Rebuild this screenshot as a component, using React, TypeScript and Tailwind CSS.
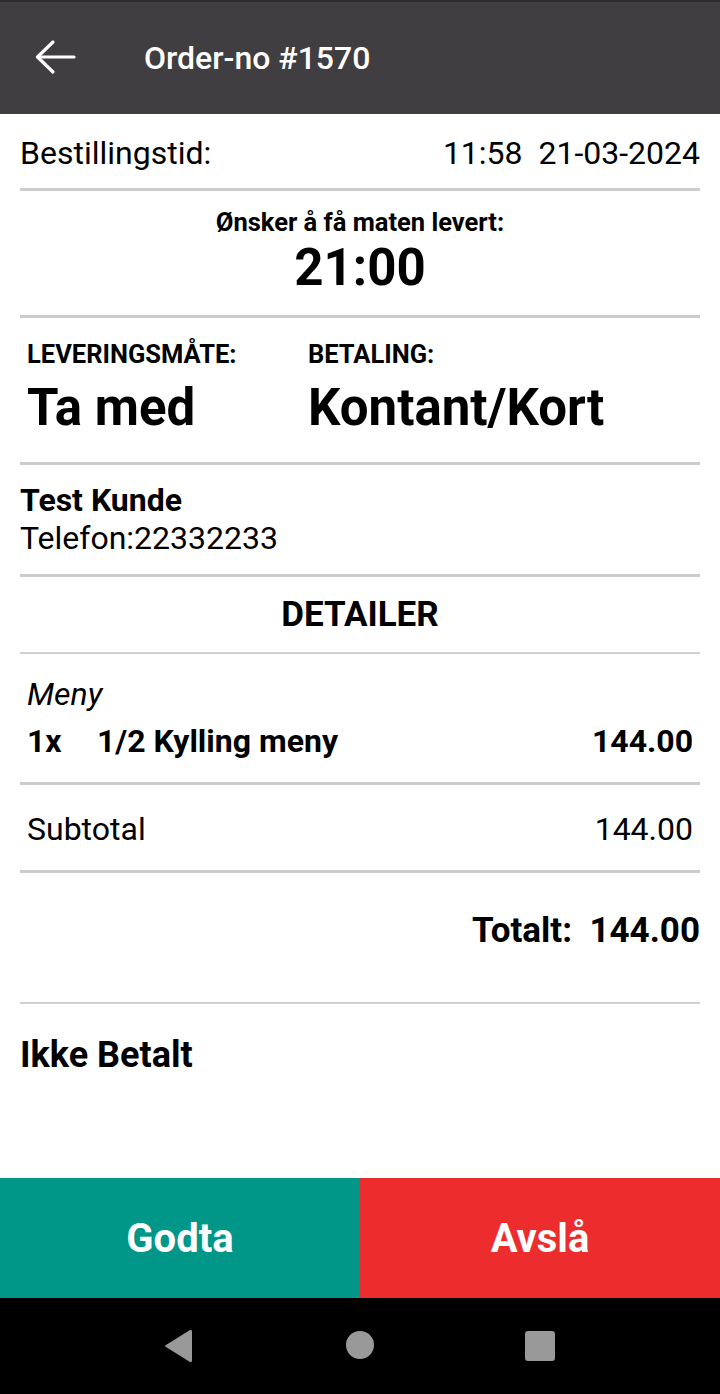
import React from "react";

function Divider({ thin = false }: { thin?: boolean }) {
  return <div className={thin ? "h-[2px] bg-[#d0d0d0]" : "h-[3px] bg-[#cccccc]"} />;
}

function BackArrow() {
  return (
    <svg width="44" height="40" viewBox="0 0 44 40" fill="none" stroke="white" strokeWidth="3.2" strokeLinecap="round" strokeLinejoin="round">
      <path d="M40 19 H4" />
      <path d="M19 4 L3.5 19 L19 34" />
    </svg>
  );
}

function NavBar() {
  return (
    <div className="h-[96px] bg-black flex items-center">
      <svg width="720" height="96" viewBox="0 0 720 96">
        <path d="M190 32 Q192 31 192 34 V62 Q192 65 190 64 L166 49 Q164 48 166 47 Z" fill="#999999" />
        <circle cx="360" cy="47" r="14" fill="#999999" />
        <rect x="525" y="33" width="30" height="30" rx="3" fill="#999999" />
      </svg>
    </div>
  );
}

export default function App() {
  return (
    <div className="h-[1394px] flex flex-col bg-white text-black font-['Roboto','Noto_Sans',sans-serif]">
      <div className="h-[2px] bg-[#2d2c2e]" />
      <header className="h-[112px] bg-[#403e40] flex items-center">
        <div className="ml-[34px]">
          <BackArrow />
        </div>
        <h1 className="ml-[66px] text-[32px] font-medium text-white leading-none">Order-no #1570</h1>
      </header>

      <main className="flex-1 px-5">
        <div className="h-[74px] flex items-center justify-between pt-[4px] text-[32px] leading-none">
          <span>Bestillingstid:</span>
          <span className="whitespace-pre">11:58  21-03-2024</span>
        </div>
        <Divider />

        <div className="h-[124px] flex flex-col items-center pt-[16px]">
          <p className="text-[25.5px] font-bold leading-[30px]">Ønsker å få maten levert:</p>
          <p className="mt-[4px] text-[51px] font-bold leading-[54px]">21:00</p>
        </div>
        <Divider />

        <div className="h-[144px] grid grid-cols-[281px_1fr] pl-[7px] pt-[21px]">
          <div>
            <p className="text-[25.5px] font-bold leading-[30px]">LEVERINGSMÅTE:</p>
            <p className="mt-[10px] text-[51px] font-bold leading-[58px]">Ta med</p>
          </div>
          <div>
            <p className="text-[25.5px] font-bold leading-[30px]">BETALING:</p>
            <p className="mt-[10px] text-[51px] font-bold leading-[58px]">Kontant/Kort</p>
          </div>
        </div>
        <Divider />

        <div className="h-[109px] pt-[17px]">
          <p className="text-[32px] font-bold leading-[36px]">Test Kunde</p>
          <p className="mt-[2px] text-[32px] leading-[36px]">Telefon:22332233</p>
        </div>
        <Divider />

        <div className="h-[75px] flex items-center justify-center">
          <h2 className="text-[35px] font-bold leading-none">DETAILER</h2>
        </div>
        <Divider thin />

        <div className="h-[128px] px-[7px] pt-[22px]">
          <p className="text-[32px] italic leading-[36px]">Meny</p>
          <div className="mt-[10px] flex items-center text-[32px] font-bold leading-[38px]">
            <span className="w-[70px]">1x</span>
            <span className="flex-1">1/2 Kylling meny</span>
            <span>144.00</span>
          </div>
        </div>
        <Divider />

        <div className="h-[85px] flex items-center justify-between px-[7px] pt-[3px] text-[32px] leading-none">
          <span>Subtotal</span>
          <span>144.00</span>
        </div>
        <Divider />

        <div className="h-[129px] flex justify-end pt-[37px]">
          <p className="text-[35px] font-bold leading-[42px] whitespace-pre">Totalt:  144.00</p>
        </div>
        <Divider thin />

        <div className="pt-[30px]">
          <p className="text-[36px] font-bold leading-[42px]">Ikke Betalt</p>
        </div>
      </main>

      <div className="h-[120px] grid grid-cols-2">
        <button className="bg-[#009688] text-white text-[40px] font-bold pt-[2px]">Godta</button>
        <button className="bg-[#ed2d2d] text-white text-[40px] font-bold pt-[2px]">Avslå</button>
      </div>
      <NavBar />
    </div>
  );
}
